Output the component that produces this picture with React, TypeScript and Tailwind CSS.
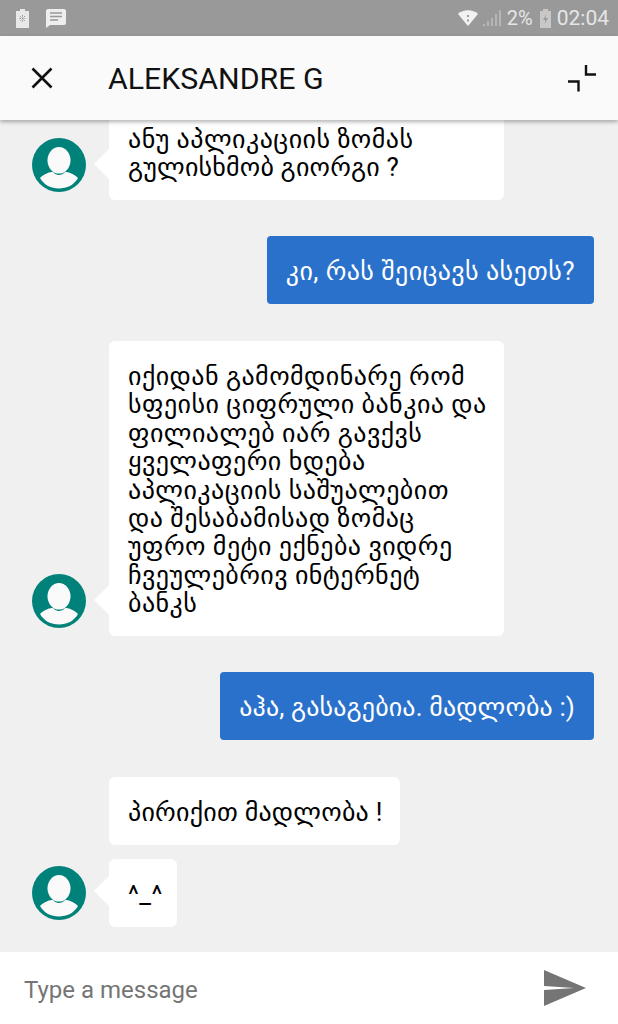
import type { ReactNode } from 'react';

const bubbleFont = 'font-["Roboto","DejaVu_Sans",sans-serif]';

function Avatar() {
  return (
    <svg viewBox="0 0 54 54" className="w-[54px] h-[54px] shrink-0">
      <circle cx="27" cy="27" r="27" fill="#00827a" />
      <ellipse cx="27" cy="22.3" rx="11.5" ry="13.3" fill="#fafafa" />
      <path d="M8 40 C13 35 18 34 21 34 C24 38 30 38 33 34 C36 34 41 35 46 40 C42 47 35 50.5 27 50.5 C19 50.5 12 47 8 40 Z" fill="#fafafa" />
    </svg>
  );
}

function Incoming({
  lines,
  width,
  avatar,
  top,
  avatarGap = 'mb-[8px]',
}: {
  lines: ReactNode[];
  width: string;
  avatar?: boolean;
  top?: string;
  avatarGap?: string;
}) {
  return (
    <div className={`flex items-end pl-[32px] ${top ?? ''}`}>
      <div className={`w-[54px] shrink-0 h-[54px] ${avatarGap}`}>{avatar && <Avatar />}</div>
      <div className={`relative ml-[23px] bg-white rounded-[6px] px-[19px] pt-[21.3px] pb-[18.3px] ${width}`}>
        {avatar && (
          <div className="absolute left-[-15px] bottom-[21px] w-0 h-0 border-y-[15px] border-y-transparent border-r-[15px] border-r-white" />
        )}
        {lines.map((l, i) => (
          <p key={i} className={`${bubbleFont} text-[26px] leading-[28.4px] tracking-[0.45px] text-black whitespace-nowrap`}>
            {l}
          </p>
        ))}
      </div>
    </div>
  );
}

function Outgoing({ text, top, tracking }: { text: string; top: string; tracking: string }) {
  return (
    <div className={`flex justify-end pr-[24px] ${top}`}>
      <div className="bg-[#2a71cb] rounded-[4px] px-[19px] pt-[20.8px] pb-[18.8px]">
        <p className={`${bubbleFont} text-[26px] leading-[28.4px] text-white whitespace-nowrap ${tracking}`}>{text}</p>
      </div>
    </div>
  );
}

export default function App() {
  return (
    <div className='w-[618px] h-[1024px] flex flex-col overflow-hidden bg-[#f0f0f0] font-["Roboto",sans-serif]'>
      <div className="h-[36px] bg-[#999999] flex items-center justify-between pl-[16px] pr-[9px] shrink-0">
        <div className="flex items-center gap-[17px]">
          <svg width="13" height="19" viewBox="0 0 13 19">
            <path d="M4 0h5v2h4v17H0V2h4z" fill="#e8e8e8" />
            <path d="M6.5 6v7M3.5 9.5h6M4 7l5 5M9 7l-5 5" stroke="#999" strokeWidth="1" strokeDasharray="1.5 1" />
          </svg>
          <svg width="20" height="19" viewBox="0 0 20 19">
            <path d="M2 0h16a2 2 0 0 1 2 2v12a2 2 0 0 1-2 2H4l-4 3V2a2 2 0 0 1 2-2z" fill="#eeeeee" />
            <path d="M4 4h12M4 7.5h12M4 11h8" stroke="#999" strokeWidth="1.6" />
          </svg>
        </div>
        <div className="flex items-center text-[#e6e6e6]">
          <svg width="20" height="16" viewBox="0 0 20 16">
            <path d="M0 4 C5 -1 15 -1 20 4 L10 16 Z" fill="#f2f2f2" />
            <path d="M10 5v2M10 9.5v2" stroke="#999" strokeWidth="2" />
          </svg>
          <svg width="18" height="18" viewBox="0 0 18 18" className="ml-[5px]">
            <path d="M1 17v-2M5 17v-5M9 17v-8M13 17v-12M17 17v-16" stroke="#bdbdbd" strokeWidth="1.6" />
          </svg>
          <span className="ml-[6px] text-[20px] leading-none">2%</span>
          <svg width="11" height="19" viewBox="0 0 11 19" className="ml-[7px]">
            <path d="M3 0h5v2h3v17H0V2h3z" fill="#c8c8c8" />
            <path d="M6.5 5 3 11h2.5L4.5 15 8 9H5.5z" fill="#999" />
          </svg>
          <span className="ml-[6px] text-[21px] leading-none">02:04</span>
        </div>
      </div>

      <div className="relative z-10 h-[84px] shrink-0 bg-[#fafafa] shadow-[0_2px_4px_rgba(0,0,0,0.3)] flex items-center pl-[31px] pr-[22px]">
        <svg width="22" height="22" viewBox="0 0 22 22">
          <path d="M1.5 1.5l19 19M20.5 1.5l-19 19" stroke="#111" strokeWidth="2.6" />
        </svg>
        <h1 className="ml-[55px] pt-[3px] text-[30.3px] leading-none text-[#111] flex-1">ALEKSANDRE G</h1>
        <svg width="28" height="28" viewBox="0 0 28 28">
          <path d="M18 1v9.5h10M0 17.5h10.5v10" fill="none" stroke="#111" strokeWidth="2.4" />
        </svg>
      </div>

      <div className="flex-1 min-h-0 flex flex-col justify-end pb-[25px] overflow-hidden">
        <Incoming
          avatar
          width="w-[395px]"
          lines={['ანუ აპლიკაციის ზომას', <span className="tracking-[0.17px]">გულისხმობ გიორგი ?</span>]}
        />
        <Outgoing text="კი, რას შეიცავს ასეთს?" top="mt-[36px]" tracking="tracking-[0.4px]" />
        <Incoming
          avatar
          width="w-[395px]"
          top="mt-[37px]"
          lines={[
            'იქიდან გამომდინარე რომ',
            'სფეისი ციფრული ბანკია და',
            'ფილიალებ იარ გავქვს',
            'ყველაფერი ხდება',
            'აპლიკაციის საშუალებით',
            'და შესაბამისად ზომაც',
            'უფრო მეტი ექნება ვიდრე',
            'ჩვეულებრივ ინტერნეტ',
            'ბანკს',
          ]}
        />
        <Outgoing text="აჰა, გასაგებია. მადლობა :)" top="mt-[36px]" tracking="tracking-[0.12px]" />
        <Incoming
          width="w-[291px]"
          top="mt-[37px]"
          lines={[<span className="tracking-[0.22px]">პირიქით მადლობა !</span>]}
        />
        <Incoming avatar avatarGap="mb-[7px]" width="w-[68px]" top="mt-[14px]" lines={['^_^']} />
      </div>

      <div className="h-[72px] shrink-0 bg-white flex items-center justify-between pl-[24px] pr-[32px]">
        <span className="pt-[4px] text-[24px] text-[#757575]">Type a message</span>
        <svg width="42" height="36" viewBox="0 0 42 36">
          <path d="M0 0 L42 18 L0 36 V20 L30 18 L0 16 Z" fill="#757575" />
        </svg>
      </div>
    </div>
  );
}
